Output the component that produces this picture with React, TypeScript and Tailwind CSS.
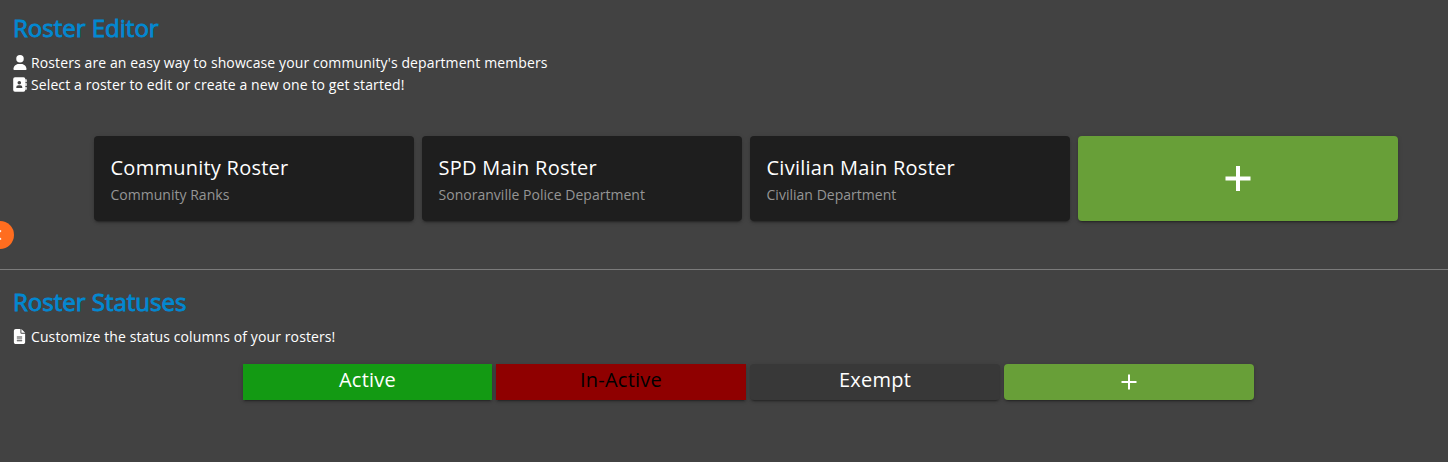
import { ReactNode } from "react";
import { FaUser, FaFileLines } from "react-icons/fa6";

const shadow =
  "shadow-[0_3px_1px_-2px_rgba(0,0,0,0.2),0_2px_2px_0_rgba(0,0,0,0.14),0_1px_5px_0_rgba(0,0,0,0.12)]";

const rosters = [
  { name: "Community Roster", department: "Community Ranks" },
  { name: "SPD Main Roster", department: "Sonoranville Police Department" },
  { name: "Civilian Main Roster", department: "Civilian Department" },
];

const statuses = [
  { name: "Active", style: "w-[249px] bg-[#139a13] text-white" },
  { name: "In-Active", style: "w-[250px] bg-[#8f0000] text-black" },
  { name: "Exempt", style: "w-[250px] rounded bg-[#383838] text-white" },
];

function AddressBookIcon() {
  return (
    <svg width="14" height="15" viewBox="0 0 14 15" fill="currentColor" className="shrink-0">
      <path
        fillRule="evenodd"
        d="M2 .3h8.500a1.800 1.800 0 0 1 1.800 1.800v10.800a1.800 1.800 0 0 1-1.800 1.800H2a1.800 1.800 0 0 1-1.800-1.800V2.100A1.800 1.800 0 0 1 2 .3ZM6.300 3.900a1.800 1.800 0 1 0 0 3.600 1.800 1.800 0 0 0 0-3.600ZM5.500 8.300A2.300 2.300 0 0 0 3.200 10.600c0 .3.200.5.500.500h5.200c.3 0 .5-.2.500-.500A2.300 2.300 0 0 0 7.100 8.300Z"
      />
      <path d="M12.300 2.300h.9c.3 0 .5.2.5.500v1.900c0 .3-.2.500-.5.500h-.9ZM12.300 6.100h.9c.3 0 .5.2.5.500v1.900c0 .3-.2.500-.5.500h-.9ZM12.300 9.900h.9c.3 0 .5.2.5.500v1.900c0 .3-.2.500-.5.500h-.9Z" />
    </svg>
  );
}

function Heading({ children }: { children: ReactNode }) {
  return (
    <h2 className="h-9 text-[24px] leading-9 text-[#0288d1] [-webkit-text-stroke:0.9px_#0288d1]">
      {children}
    </h2>
  );
}

function Note({ icon, children }: { icon: ReactNode; children: ReactNode }) {
  return (
    <p className="flex h-[22px] items-center gap-1 text-[14px] leading-[22px] tracking-[0.11px]">
      <span className="-mt-px flex w-3.5 shrink-0">{icon}</span>
      {children}
    </p>
  );
}

export default function App() {
  return (
    <main className="relative flex h-[462px] w-full flex-col overflow-hidden bg-[#424242] font-['Open_Sans',sans-serif] text-white">
      <section className="h-[269px] pt-[10px]">
        <div className="pl-[13px]">
          <Heading>Roster Editor</Heading>
          <div className="pt-1.5">
            <Note icon={<FaUser className="h-[15px] w-3.5 shrink-0" />}>
              Rosters are an easy way to showcase your community's department members
            </Note>
            <Note icon={<AddressBookIcon />}>
              Select a roster to edit or create a new one to get started!
            </Note>
          </div>
        </div>
        <div className="mt-10 flex gap-2 pl-[94px]">
          {rosters.map((r) => (
            <article key={r.name} className={`h-[85px] w-80 rounded bg-[#1e1e1e] pt-4 pl-[16.500px] ${shadow}`}>
              <h3 className="text-[20px] leading-8 tracking-[0.25px]">{r.name}</h3>
              <p className="text-[14px] leading-[22px] tracking-[0.02px] text-[#959595]">{r.department}</p>
            </article>
          ))}
          <button aria-label="New roster" className={`flex h-[85px] w-80 items-center justify-center rounded bg-[#689f38] ${shadow}`}>
            <svg width="26" height="26" viewBox="0 0 26 26" fill="none" stroke="currentColor" strokeWidth="4">
              <path d="M.5 12.500h25M13 0v25" />
            </svg>
          </button>
        </div>
      </section>
      <section className="border-t border-[#7b7b7b] pt-[14px]">
        <div className="pl-[13px]">
          <Heading>Roster Statuses</Heading>
          <div className="pt-1.5">
            <Note icon={<FaFileLines className="h-[15px] w-[13px] shrink-0" />}>Customize the status columns of your rosters!</Note>
          </div>
        </div>
        <div className="mt-4 flex gap-1 pl-[243px]">
          {statuses.map((s) => (
            <div key={s.name} className={`h-9 text-center text-[20px] leading-8 tracking-[0.25px] ${s.style} ${shadow}`}>
              {s.name}
            </div>
          ))}
          <button aria-label="New status" className={`flex h-9 w-[250px] items-center justify-center rounded bg-[#689f38] ${shadow}`}>
            <svg width="16" height="16" viewBox="0 0 16 16" fill="none" stroke="currentColor" strokeWidth="2">
              <path d="M.5 8h15M8 .5v15" />
            </svg>
          </button>
        </div>
      </section>
      <button aria-label="Open panel" className="absolute top-[221px] -left-3.5 flex size-7 items-center justify-center rounded-full bg-[#ff6d1f]">
        <svg width="28" height="28" viewBox="0 0 28 28" fill="none" stroke="currentColor" strokeWidth="1.5">
          <path d="M15 9.500 10.500 14 15 18.500" />
        </svg>
      </button>
    </main>
  );
}
